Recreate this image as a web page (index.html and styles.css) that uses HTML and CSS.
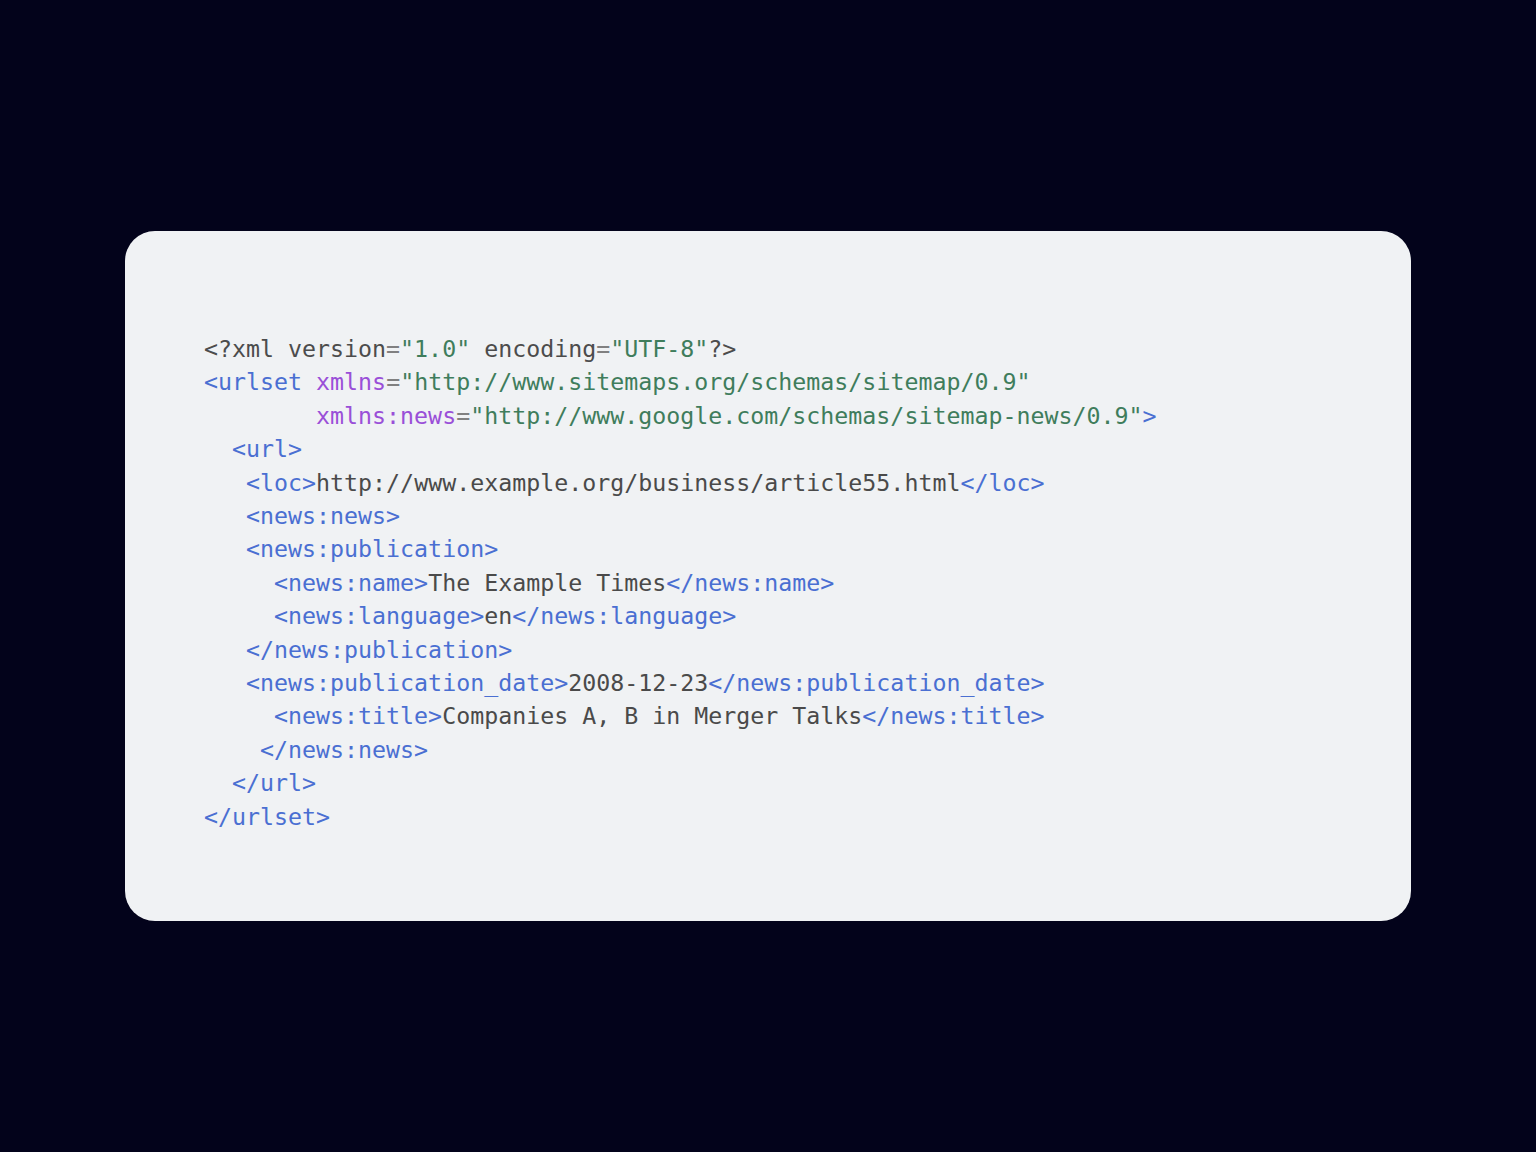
FILE: index.html
```html
<!DOCTYPE html>
<html lang="en">
<head>
<meta charset="utf-8">
<title>News sitemap</title>
<link rel="stylesheet" href="styles.css">
</head>
<body>
<main class="card">
<pre class="code"><span class="pi">&lt;?xml version<span class="e">=</span><span class="s">"1.0"</span> encoding<span class="e">=</span><span class="s">"UTF-8"</span>?&gt;</span>
<span class="t">&lt;urlset</span> <span class="a">xmlns</span><span class="e">=</span><span class="s">"http://www.sitemaps.org/schemas/sitemap/0.9"</span>
        <span class="a">xmlns:news</span><span class="e">=</span><span class="s">"http://www.google.com/schemas/sitemap-news/0.9"</span><span class="t">&gt;</span>
  <span class="t">&lt;url&gt;</span>
   <span class="t">&lt;loc&gt;</span>http://www.example.org/business/article55.html<span class="t">&lt;/loc&gt;</span>
   <span class="t">&lt;news:news&gt;</span>
   <span class="t">&lt;news:publication&gt;</span>
     <span class="t">&lt;news:name&gt;</span>The Example Times<span class="t">&lt;/news:name&gt;</span>
     <span class="t">&lt;news:language&gt;</span>en<span class="t">&lt;/news:language&gt;</span>
   <span class="t">&lt;/news:publication&gt;</span>
   <span class="t">&lt;news:publication_date&gt;</span>2008-12-23<span class="t">&lt;/news:publication_date&gt;</span>
     <span class="t">&lt;news:title&gt;</span>Companies A, B in Merger Talks<span class="t">&lt;/news:title&gt;</span>
    <span class="t">&lt;/news:news&gt;</span>
  <span class="t">&lt;/url&gt;</span>
<span class="t">&lt;/urlset&gt;</span></pre>
</main>
</body>
</html>
```

FILE: styles.css
```css
html, body {
  margin: 0;
  padding: 0;
}
body {
  background: #03031b;
  min-height: 100vh;
  display: flex;
  align-items: center;
  justify-content: center;
}
.card {
  box-sizing: border-box;
  width: 1286px;
  height: 690px;
  background: #f0f2f4;
  border-radius: 30px;
  padding: 101px 79px 0;
}
.code {
  margin: 0;
  font-family: "DejaVu Sans Mono", "Liberation Mono", monospace;
  font-size: 23.27px;
  line-height: 33.4px;
  color: #4a4a4a;
}
.pi { color: #4c4c4c; }
.t { color: #4a6fd2; }
.a { color: #9a4fd8; }
.e { color: #808080; }
.s { color: #3f7d5c; }
```
